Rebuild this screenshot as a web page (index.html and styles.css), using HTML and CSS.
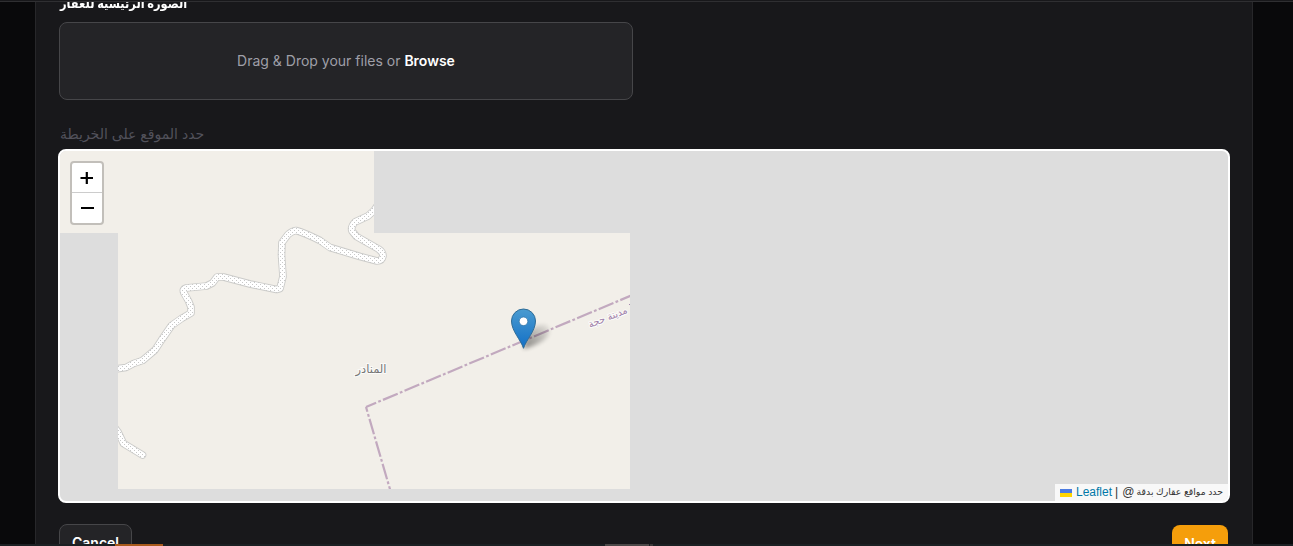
FILE: index.html
```html
<!DOCTYPE html>
<html lang="en">
<head>
<meta charset="utf-8">
<title>Property</title>
<link rel="stylesheet" href="styles.css">
</head>
<body>
<div class="page">
  <div class="topbar"></div>
  <main class="card">
    <div class="label label-strong"><span dir="rtl">الصورة الرئيسية للعقار</span></div>
    <div class="dropzone"><span>Drag &amp; Drop your files or <b>Browse</b></span></div>
    <div class="label label-muted"><span dir="rtl">حدد الموقع على الخريطة</span></div>
    <div class="map">
      <svg class="tiles" viewBox="60 151 1168 350" width="1168" height="350">
        <defs>
          <pattern id="gravel" width="4" height="4" patternUnits="userSpaceOnUse">
            <rect width="4" height="4" fill="#fff"/>
            <rect width="1" height="1" fill="#c8c8c8"/>
            <rect x="2" y="2" width="1" height="1" fill="#c8c8c8"/>
          </pattern>
          <clipPath id="loaded"><path d="M60 151H374V233H630V489H118V233H60Z"/></clipPath>
          <linearGradient id="pin" x1="0" y1="0" x2="0" y2="1"><stop offset="0" stop-color="#4a9bd0"/><stop offset="1" stop-color="#126fc6"/></linearGradient>
          <filter id="soft" x="-50%" y="-50%" width="200%" height="200%"><feGaussianBlur stdDeviation="2"/></filter>
          <linearGradient id="shade" x1="0" y1="1" x2="1" y2="0"><stop offset="0" stop-color="#000" stop-opacity=".75"/><stop offset="1" stop-color="#000" stop-opacity=".08"/></linearGradient>
          <path id="road" d="M377 206L374 210.5L368 216L355 222Q350.500 227 352 231L356.500 236.500L378.500 249Q383 252 383 256Q382 261 377 261L360 256.500L330 247.500L320 240.500Q305 233 296 230.500Q292 231 288 234.500L282 242.500L281.500 255L283 276.500L280 288.500L276.500 289.500L250 284L223.500 277L217 277L212.500 283L206.500 286L186 288Q182 289 184 293L188.500 301L191 307V313L181.500 318.500L171.500 325.500L161.500 340L155 350L142.500 360.500L133.500 363.500L126 367.500L115 369M115 428L118 432L123.500 443.500L142.500 455"/>
        </defs>
        <g clip-path="url(#loaded)">
          <rect x="60" y="151" width="570" height="338" fill="#f2efe9"/>
          <use href="#road" class="road-case"/>
          <use href="#road" class="road-fill"/>
          <path class="boundary" stroke-dashoffset="5" d="M366 407L632 295.200"/>
          <path class="boundary" stroke-dashoffset="11" d="M366 407L390.500 491"/>
          <text class="place" x="371" y="373" text-anchor="middle" textLength="31" lengthAdjust="spacingAndGlyphs">المنادر</text>
          <text class="district" transform="translate(590 328) rotate(-22)" textLength="41" lengthAdjust="spacingAndGlyphs">مدينة حجة</text>
          <path class="district-next" d="M629 305l1 -1"/>
        </g>
        <path d="M523.500 349L526 337Q533 323 546 325Q554 331 544 340Q535 346 523.500 349Z" fill="url(#shade)" opacity=".6" filter="url(#soft)"/>
        <path d="M523.500 348.300C521 340 511.500 331 511.500 321A12 12 0 0 1 535.500 321C535.500 331 526 340 523.500 348.300Z" fill="url(#pin)" stroke="#2e6c97"/>
        <circle cx="523.500" cy="321.300" r="4.300" fill="#fff" stroke="#3276a8" stroke-width=".8"/>
      </svg>
      <div class="zoom">
        <div class="zoom-btn"><svg width="14" height="14"><path d="M.5 7H13M6.800 1V13" stroke="#000" stroke-width="2.200"/></svg></div>
        <div class="zoom-btn"><svg width="14" height="14"><path d="M1 7H14" stroke="#000" stroke-width="2"/></svg></div>
      </div>
      <div class="attribution">
        <svg class="flag" width="12" height="8"><path fill="#4c7be1" d="M0 0h12v4H0z"/><path fill="#ffd500" d="M0 4h12v4H0z"/></svg>
        <span class="leaflet">Leaflet</span><span class="bar">|</span><span class="at">@</span><span class="note" dir="rtl">حدد مواقع عقارك بدقة</span>
      </div>
    </div>
    <div class="actions">
      <button class="btn btn-cancel">Cancel</button>
      <button class="btn btn-next">Next</button>
    </div>
  </main>
  <div class="bottombar"><i class="orange"></i><i class="grey"></i><i class="grey-end"></i></div>
</div>
</body>
</html>
```
FILE: styles.css
```css
* { box-sizing: border-box; }
body { margin: 0; background: #09090b; font-family: Inter, "DejaVu Sans", sans-serif; }
.page { position: relative; width: 1293px; height: 546px; overflow: hidden; }
.topbar { position: absolute; z-index: 2; left: 0; top: 0; width: 100%; height: 2px; background: #18181b; border-bottom: 1px solid #2f2f32; }
.card { width: 1218px; height: 546px; margin-left: 35px; padding: 0 22px; background: #18181b; border: solid #27272a; border-width: 0 1px; overflow: hidden; }
.label { height: 22px; padding-left: 2px; white-space: nowrap; line-height: 20px; }
.label span { display: inline-block; transform-origin: left; }
.label-strong { color: #fff; font-weight: 700; font-size: 13px; line-height: 6px; }
.label-strong span { transform: scaleX(.878); }
.label-muted { margin-top: 24px; height: 25px; color: #52525b; font-size: 14px; line-height: 19px; }
.dropzone { width: 574px; height: 78px; margin-left: 1px; padding-bottom: 2px; display: flex; align-items: center; justify-content: center; background: #242427; border: 1px solid #464649; border-radius: 8px; color: #9f9fa8; font-size: 14px; }
.dropzone b { color: #fff; font-weight: 600; }
.map { position: relative; width: 1172px; height: 354px; border: 2px solid #fff; border-radius: 8px; background: #ddd; overflow: hidden; }
.tiles { display: block; }
.road-case { fill: none; stroke: #cbcbc9; stroke-width: 7.6; stroke-linecap: round; stroke-linejoin: round; }
.road-fill { fill: none; stroke: url(#gravel); stroke-width: 5.8; stroke-linecap: round; stroke-linejoin: round; }
.boundary { fill: none; stroke: #c2a9bf; stroke-width: 2.2; stroke-dasharray: 16 2.300 2.800 2.300; }
.place, .district { font-family: "DejaVu Sans", sans-serif; paint-order: stroke; stroke: #fff; stroke-width: 2px; stroke-opacity: .75; }
.place { font-size: 12px; fill: #777; }
.district { font-size: 10.500px; fill: #a07fa9; }
.district-next { stroke: #a485ad; }
.zoom { position: absolute; left: 10px; top: 10px; width: 34px; height: 64px; background: #fff; border: 2px solid #c2bfba; border-radius: 4px; }
.zoom-btn { height: 29px; display: flex; align-items: center; justify-content: center; }
.zoom-btn + .zoom-btn { height: 31px; border-top: 1px solid #ccc; }
.attribution { position: absolute; right: 0; bottom: 0; height: 17px; width: 173px; padding: 0 5px; display: flex; align-items: center; background: rgba(255,255,255,.8); color: #333; font: 12px/17px "Liberation Sans", "DejaVu Sans", sans-serif; white-space: nowrap; }
.attribution > * { flex-shrink: 0; }
.leaflet { color: #0078a8; margin-left: 4px; }
.bar { margin-left: 3px; }
.at { margin-left: 4px; }
.note { margin-left: auto; font-size: 9.3px; }
.actions { display: flex; justify-content: space-between; margin-top: 21px; padding: 0 2px 0 1px; }
.btn { height: 36px; border-radius: 8px; padding: 2px 0 0; color: #fff; font: 600 14px/20px Inter, sans-serif; }
.btn-cancel { width: 73px; background: #242427; border: 1px solid #464649; }
.btn-next { width: 56px; margin-top: 1px; background: #f59e0b; border: 0; }
.bottombar { position: absolute; left: 0; bottom: 0; width: 100%; height: 2px; background: #1b2023; display: flex; }
.orange { width: 48px; margin-left: 115px; background: #a85a1c; }
.grey { width: 44px; margin-left: 442px; background: #4b4848; }
.grey-end { width: 3px; margin-left: 1px; background: #3b3939; }
```
